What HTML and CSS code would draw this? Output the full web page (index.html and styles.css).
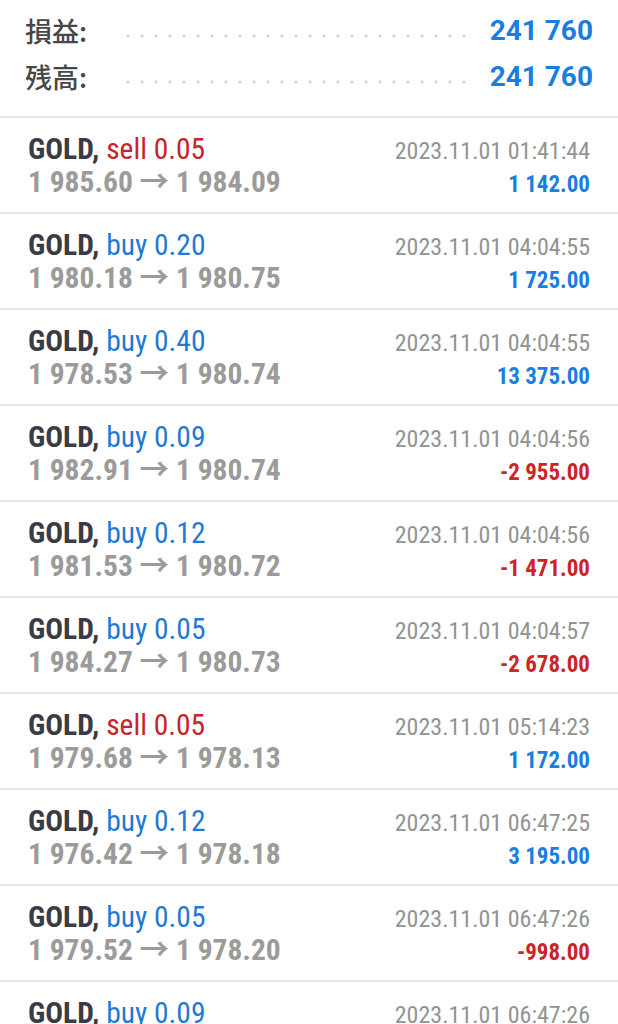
FILE: index.html
```html
<!DOCTYPE html>
<html lang="ja">
<head>
    <meta charset="UTF-8">
    <meta name="viewport" content="width=device-width, initial-scale=1.0">
    <title>履歴</title>
    <link rel="stylesheet" href="styles.css">
</head>
<body>
    <div class="summary">
        <div class="summary-row">
            <span class="label">損益:</span>
            <span class="dots"></span>
            <span class="value">241 760</span>
        </div>
        <div class="summary-row">
            <span class="label">残高:</span>
            <span class="dots"></span>
            <span class="value">241 760</span>
        </div>
    </div>

    <div class="deals">
        <div class="deal">
            <div class="deal-left">
                <div class="title">GOLD, <span class="sell">sell 0.05</span></div>
                <div class="prices">1 985.60 → 1 984.09</div>
            </div>
            <div class="deal-right">
                <div class="time">2023.11.01 01:41:44</div>
                <div class="profit">1 142.00</div>
            </div>
        </div>
        <div class="deal">
            <div class="deal-left">
                <div class="title">GOLD, <span class="buy">buy 0.20</span></div>
                <div class="prices">1 980.18 → 1 980.75</div>
            </div>
            <div class="deal-right">
                <div class="time">2023.11.01 04:04:55</div>
                <div class="profit">1 725.00</div>
            </div>
        </div>
        <div class="deal">
            <div class="deal-left">
                <div class="title">GOLD, <span class="buy">buy 0.40</span></div>
                <div class="prices">1 978.53 → 1 980.74</div>
            </div>
            <div class="deal-right">
                <div class="time">2023.11.01 04:04:55</div>
                <div class="profit">13 375.00</div>
            </div>
        </div>
        <div class="deal">
            <div class="deal-left">
                <div class="title">GOLD, <span class="buy">buy 0.09</span></div>
                <div class="prices">1 982.91 → 1 980.74</div>
            </div>
            <div class="deal-right">
                <div class="time">2023.11.01 04:04:56</div>
                <div class="profit loss">-2 955.00</div>
            </div>
        </div>
        <div class="deal">
            <div class="deal-left">
                <div class="title">GOLD, <span class="buy">buy 0.12</span></div>
                <div class="prices">1 981.53 → 1 980.72</div>
            </div>
            <div class="deal-right">
                <div class="time">2023.11.01 04:04:56</div>
                <div class="profit loss">-1 471.00</div>
            </div>
        </div>
        <div class="deal">
            <div class="deal-left">
                <div class="title">GOLD, <span class="buy">buy 0.05</span></div>
                <div class="prices">1 984.27 → 1 980.73</div>
            </div>
            <div class="deal-right">
                <div class="time">2023.11.01 04:04:57</div>
                <div class="profit loss">-2 678.00</div>
            </div>
        </div>
        <div class="deal">
            <div class="deal-left">
                <div class="title">GOLD, <span class="sell">sell 0.05</span></div>
                <div class="prices">1 979.68 → 1 978.13</div>
            </div>
            <div class="deal-right">
                <div class="time">2023.11.01 05:14:23</div>
                <div class="profit">1 172.00</div>
            </div>
        </div>
        <div class="deal">
            <div class="deal-left">
                <div class="title">GOLD, <span class="buy">buy 0.12</span></div>
                <div class="prices">1 976.42 → 1 978.18</div>
            </div>
            <div class="deal-right">
                <div class="time">2023.11.01 06:47:25</div>
                <div class="profit">3 195.00</div>
            </div>
        </div>
        <div class="deal">
            <div class="deal-left">
                <div class="title">GOLD, <span class="buy">buy 0.05</span></div>
                <div class="prices">1 979.52 → 1 978.20</div>
            </div>
            <div class="deal-right">
                <div class="time">2023.11.01 06:47:26</div>
                <div class="profit loss">-998.00</div>
            </div>
        </div>
        <div class="deal">
            <div class="deal-left">
                <div class="title">GOLD, <span class="buy">buy 0.09</span></div>
                <div class="prices">1 981.06 → 1 978.20</div>
            </div>
            <div class="deal-right">
                <div class="time">2023.11.01 06:47:26</div>
                <div class="profit loss">-2 574.00</div>
            </div>
        </div>
    </div>
</body>
</html>
```

FILE: styles.css
```css
body {
    margin: 0;
    background-color: #fff;
    font-family: "Roboto Condensed", Roboto, "Noto Sans CJK JP", sans-serif;
    overflow: hidden;
}

/* Totals at the top */
.summary {
    padding: 7px 25px 17px 25px;
    border-bottom: 2px solid #e6e6e6;
}

.summary-row {
    display: flex;
    align-items: center;
    height: 46px;
}

.label {
    font-family: "Noto Sans CJK JP", sans-serif;
    font-size: 27px;
    font-weight: 500;
    color: #474747;
    width: 96px;
}

.dots {
    flex: 1;
    height: 4px;
    margin: 12px 20px 0 0;
    background-image: radial-gradient(circle, #d9d9d9 1.4px, transparent 1.8px);
    background-size: 14px 4px;
    background-repeat: repeat-x;
}

.value {
    font-family: Roboto, sans-serif;
    font-size: 28px;
    font-weight: bold;
    color: #1a7ee0;
}

/* Deal rows */
.deal {
    display: flex;
    justify-content: space-between;
    height: 94px;
    padding: 0 28px;
    border-bottom: 2px solid #e6e6e6;
    align-items: flex-start;
}

.deal-left {
    padding-top: 15px;
}

.title {
    font-size: 29.5px;
    font-weight: bold;
    color: #3b3b43;
    line-height: 33px;
}

.sell, .buy {
    font-weight: normal;
}

.sell {
    color: #c8242a;
}

.buy {
    color: #1f7bd4;
}

.prices {
    font-size: 29.5px;
    font-weight: bold;
    color: #9b9b9b;
    line-height: 33px;
}

.deal-right {
    text-align: right;
    padding-top: 17px;
}

.time {
    font-size: 24px;
    color: #939393;
    line-height: 33px;
}

.profit {
    font-size: 23px;
    font-weight: bold;
    color: #1a7ee0;
    line-height: 33px;
}

.loss {
    color: #cc2428;
}
```
